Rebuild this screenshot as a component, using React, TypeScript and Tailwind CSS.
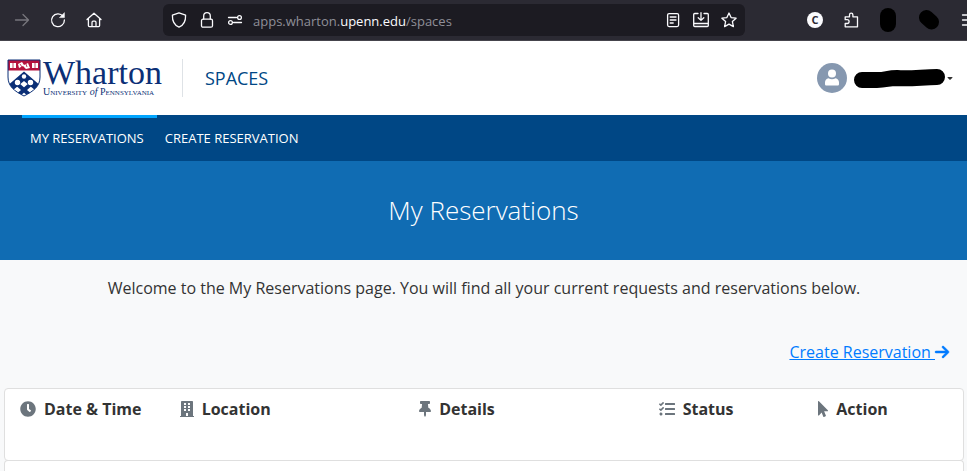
import { FaBuilding, FaClock, FaMousePointer, FaTasks, FaThumbtack } from 'react-icons/fa';
import { FaArrowRight, FaCaretDown } from 'react-icons/fa6';

const columns = [
  { label: 'Date & Time', icon: FaClock, iconWidth: 'w-4', width: 'w-2/12' },
  { label: 'Location', icon: FaBuilding, iconWidth: 'w-3.5', width: 'w-3/12' },
  { label: 'Details', icon: FaThumbtack, iconWidth: 'w-3', width: 'w-3/12' },
  { label: 'Status', icon: FaTasks, iconWidth: 'w-4', width: 'w-2/12' },
  { label: 'Action', icon: FaMousePointer, iconWidth: 'w-2.5', width: 'w-2/12' },
];

const stroke = {
  fill: 'none',
  stroke: 'currentColor',
  strokeWidth: 1.3,
  strokeLinecap: 'round' as const,
  strokeLinejoin: 'round' as const,
};

function BrowserBar() {
  return (
    <div className="h-[41px] shrink-0 flex items-center bg-[#2b2a33] border-b border-[#45444c] text-[#fbfbfe] overflow-hidden">
      <div className="w-[163px] shrink-0 flex items-center gap-5 pl-3.5">
        <button aria-label="Forward" className="text-[#77767d]">
          <svg width="16" height="16" viewBox="0 0 16 16" {...stroke}>
            <path d="M1.5 8h13M9 2.5 14.5 8 9 13.5" />
          </svg>
        </button>
        <button aria-label="Reload">
          <svg width="16" height="16" viewBox="0 0 16 16" {...stroke}>
            <path d="M13 4.2A6.4 6.4 0 1 0 14.4 8" />
            <path d="M14.4 1v4.6H9.8z" fill="currentColor" strokeWidth="0.6" />
          </svg>
        </button>
        <button aria-label="Home">
          <svg width="16" height="16" viewBox="0 0 16 16" {...stroke}>
            <path d="M1 7.6 8 1.2l7 6.4M2.4 6.6v7c0 .6.4 1 1 1h9.2c.6 0 1-.4 1-1v-7M6 14.5v-4c0-.8.5-1.3 1.2-1.3h1.6c.7 0 1.2.5 1.2 1.3v4" />
          </svg>
        </button>
      </div>
      <div className="h-8 flex-1 flex items-center rounded-md bg-[#1c1b22] px-2">
        <div className="flex items-center gap-3">
          <svg width="16" height="16" viewBox="0 0 16 16" {...stroke}>
            <path d="M8 .8 14.6 3.2c.2 5.8-1.6 9.8-6.6 12C3 13 1.2 9 1.4 3.2z" />
          </svg>
          <svg width="16" height="16" viewBox="0 0 16 16" {...stroke}>
            <rect x="2.5" y="7.2" width="11" height="8" rx="1.5" />
            <path d="M4.7 7V4a3.3 3.3 0 0 1 6.6 0v3" />
          </svg>
          <svg width="16" height="16" viewBox="0 0 16 16" {...stroke}>
            <path d="M1.5 5.5h8M6.5 10.5h8" />
            <circle cx="12.5" cy="5.5" r="1.9" />
            <circle cx="3.5" cy="10.5" r="1.9" />
          </svg>
        </div>
        <div className="flex-1 pl-2.5 pt-0.5 text-[13px] leading-5 text-[#8f8f98] whitespace-nowrap">
          apps.wharton.<span className="text-[#fbfbfe]">upenn.edu</span>/spaces
        </div>
        <div className="flex items-center gap-3">
          <button aria-label="Reader view">
            <svg width="16" height="16" viewBox="0 0 16 16" {...stroke}>
              <rect x="2.6" y="1.6" width="11" height="13" rx="1.5" />
              <path d="M5.2 5h5.8M5.2 8h5.8M5.2 11h3" />
            </svg>
          </button>
          <button aria-label="Install">
            <svg width="16" height="16" viewBox="0 0 16 16" {...stroke}>
              <path d="M5 1.5H1.7c-.6 0-1 .4-1 1v11c0 .6.4 1 1 1h12.6c.6 0 1-.4 1-1v-11c0-.6-.4-1-1-1H11M.7 11.5h14.6M8 .7v7.6M5.2 5.7 8 8.4l2.8-2.7" />
            </svg>
          </button>
          <button aria-label="Bookmark">
            <svg width="16" height="16" viewBox="0 0 16 16" {...stroke}>
              <path d="m8 1 2.1 4.6 5 .6-3.7 3.4 1 5L8 12.1l-4.4 2.5 1-5L.9 6.2l5-.6z" />
            </svg>
          </button>
        </div>
      </div>
      <div className="w-[222px] shrink-0 flex items-center gap-5 pl-[62px] *:shrink-0">
        <button aria-label="Grammar extension" className="size-4 rounded-full bg-[#fbfbfe] text-[#2b2a33] text-[11px] leading-4 font-bold">
          C
        </button>
        <button aria-label="Extensions">
          <svg width="16" height="16" viewBox="0 0 16 16" {...stroke}>
            <path d="M2.2 14.8v-3.3h2a1.9 1.9 0 0 0 0-3.8h-2V4.8h4.3V2.9a1.7 1.7 0 0 1 3.4 0v1.9h4.6v10z" />
          </svg>
        </button>
        <div className="w-4 h-6 mx-px rounded-full bg-black" />
        <svg width="24" height="22" viewBox="0 0 24 22">
          <path d="M9.5 8.5 14.5 13" stroke="#000" strokeWidth="15" strokeLinecap="round" />
        </svg>
        <button aria-label="Menu">
          <svg width="16" height="16" viewBox="0 0 16 16" {...stroke}>
            <path d="M1.5 3h13M1.5 8h13M1.5 13h13" />
          </svg>
        </button>
      </div>
    </div>
  );
}

function Shield() {
  return (
    <svg width="34" height="38" viewBox="0 0 34 38">
      <clipPath id="shield">
        <path d="M1 1h32v17c0 9-6 14-16 19C7 32 1 27 1 18z" />
      </clipPath>
      <g clipPath="url(#shield)">
        <path d="M0 0h34v38H0z" fill="#fff" />
        <path d="M0 0h34v11.5H0z" fill="#b5123e" />
        <path d="M3 4h6v5H3zM25 4h6v5h-6zM11 5l4-2 2 3 4-2 2 5-4 1-3-3-4 2z" fill="#fff" />
        <path d="M6 4v5M28 4v5M13 5l2 3M19 5l1 3" stroke="#b5123e" strokeWidth="0.8" />
        {/* chevron with three plates */}
        <path d="M17 12.500 34 27v9L17 22 0 36v-9z" fill="#0b2f76" />
        <path d="M9 24 25 38M25 24 9 38" fill="none" stroke="#0b2f76" strokeWidth="4" />
        <g fill="#fff">
          <circle cx="17" cy="17.500" r="2.200" />
          <circle cx="10.500" cy="23.500" r="2.700" />
          <circle cx="23.500" cy="23.500" r="2.700" />
        </g>
      </g>
      <path d="M1 1h32v17c0 9-6 14-16 19C7 32 1 27 1 18z" fill="none" stroke="#0b2f76" strokeWidth="1" />
    </svg>
  );
}

function Header() {
  return (
    <header className="h-[74px] shrink-0 flex items-center bg-white pl-[7px] pr-[13px]">
      <a href="#" className="flex items-center gap-0.5 text-[#0b2f76] font-['Liberation_Serif',serif]">
        <Shield />
        <span className="flex flex-col whitespace-nowrap">
          <span className="text-[34px] leading-[28px]">Wharton</span>
          <span className="text-[10px] leading-[10px] [font-variant-caps:small-caps]">
            University <i className="[font-variant-caps:normal]">of</i> Pennsylvania
          </span>
        </span>
      </a>
      <div className="ml-5 h-[38px] border-l border-[#dee2e6]" />
      <a href="#" className="ml-[22px] text-lg leading-7 text-[#004785]">SPACES</a>
      <button aria-label="Account" className="ml-auto flex items-center text-[#333]">
        <span className="size-[30px] rounded-full bg-[#8698b0] text-white flex items-center justify-center">
          <svg width="16" height="18" viewBox="0 0 16 18" fill="currentColor">
            <circle cx="8" cy="4.5" r="4" />
            <path d="M4.5 9.3c2 1.2 5 1.2 7 0 2.2.3 3.5 2 3.5 4.2v1.5c0 1-.6 1.5-1.5 1.5h-11C1.6 16.5 1 16 1 15v-1.500c0-2.200 1.300-3.900 3.500-4.200z" />
          </svg>
        </span>
        <svg className="ml-1.5" width="93" height="22" viewBox="0 0 93 22">
          <path d="M9 13h15c10 0 10-2 20-2 14 1 26-1 40-1" fill="none" stroke="#000" strokeWidth="16" strokeLinecap="round" />
        </svg>
        <FaCaretDown size={8} />
      </button>
    </header>
  );
}

export default function App() {
  return (
    <div className="min-h-screen flex flex-col bg-[#f8f9fa] text-[#333] font-['Open_Sans',sans-serif]">
      <BrowserBar />
      <Header />

      <nav className="h-[46px] shrink-0 flex bg-[#004785] pl-[22px] text-[13px] text-white">
        <a href="#" className="flex items-center border-t-3 border-[#00a5ff] pl-2 pr-[13px] pb-0.5">MY RESERVATIONS</a>
        <a href="#" className="flex items-center border-t-3 border-transparent pl-2 pr-[13px] pb-0.5">CREATE RESERVATION</a>
      </nav>

      <div className="h-[99px] shrink-0 flex items-center justify-center bg-[#106cb3] pb-0.5 text-white">
        <h1 className="text-[26px] leading-8 font-light">My Reservations</h1>
      </div>

      <main className="flex-1 flex flex-col pl-1 pr-[3px] pt-4">
        <p className="text-center text-base">Welcome to the My Reservations page. You will find all your current requests and reservations below.</p>

        <div className="mt-10 flex justify-end pr-[15px]">
          <a href="#" className="flex items-center text-base text-[#007bff]">
            <span className="underline whitespace-pre">Create Reservation </span>
            <FaArrowRight className="h-4 w-3.5 overflow-visible" stroke="currentColor" strokeWidth={16} />
          </a>
        </div>

        {/* Reservation list */}
        <div className="mt-6 h-[73px] shrink-0 rounded border border-[#dfdfdf] bg-white">
          <table className="w-full table-fixed text-left">
            <thead>
              <tr>
                {columns.map(({ label, icon: Icon, iconWidth, width }) => (
                  <th key={label} scope="col" className={`${width} px-[15px] py-2 font-bold`}>
                    <span className="flex items-center gap-2">
                      <Icon className={`h-4 shrink-0 text-[#6c757d] ${iconWidth}`} />
                      {label}
                    </span>
                  </th>
                ))}
              </tr>
            </thead>
          </table>
        </div>
        <div className="-mt-px flex-1 rounded-t border border-b-0 border-[#dfdfdf] bg-white" />
      </main>
    </div>
  );
}
